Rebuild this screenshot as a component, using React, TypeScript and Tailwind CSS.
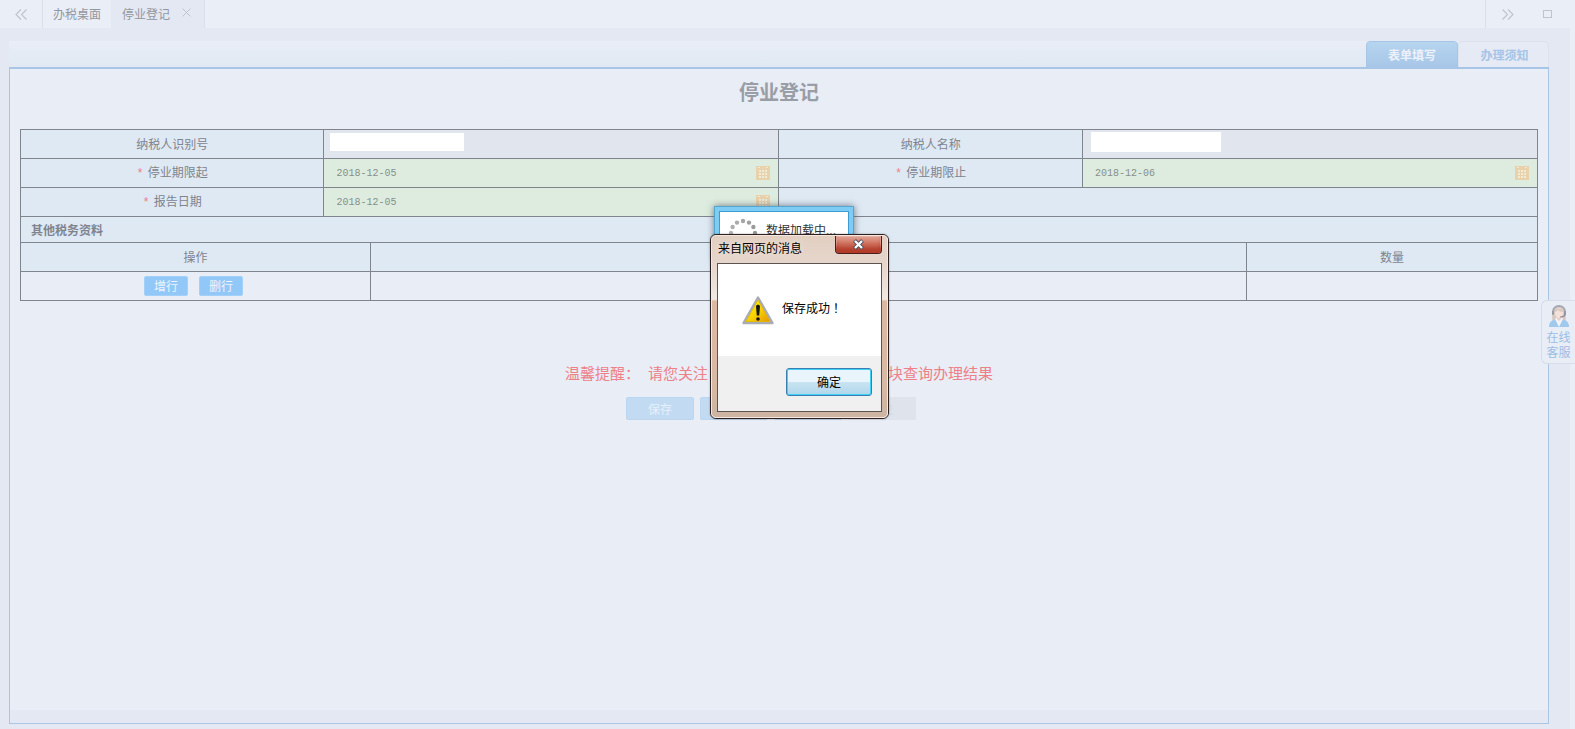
import React, { useState } from "react";

const SANS = "font-['Noto_Sans_CJK_SC','Liberation_Sans',sans-serif]";

function CalendarIcon() {
  return (
    <svg width="14" height="14" viewBox="0 0 14 14" shapeRendering="crispEdges">
      <rect width="14" height="14" fill="#e9d1ab" />
      <path d="M2 1h2v1H2zM10 1h2v1h-2z" fill="#f3e8d2" />
      <path
        d="M3 4h2v2H3zM6 4h2v2H6zM9 4h2v2H9zM3 7h2v2H3zM6 7h2v2H6zM9 7h2v2H9zM3 10h2v2H3zM6 10h2v2H6zM9 10h2v2H9z"
        fill="#eeecd6"
      />
    </svg>
  );
}

function AgentIcon() {
  return (
    <svg width="22" height="24" viewBox="0 0 22 24">
      <path d="M5 19C3 13 4 3 11 2c7 1 8 11 6 17z" fill="#d9c9c1" />
      <path d="M1 23c0-5 3-7 7-8h6c4 1 7 3 7 8z" fill="#9fcaee" />
      <path d="M7 15l4 8 4-8-2-2H9z" fill="#f3f3f6" />
      <path d="M9 11h4v4l-2 2-2-2z" fill="#e9d0c4" />
      <ellipse cx="11" cy="9" rx="4" ry="5" fill="#f3e2d9" />
      <path d="M6 8c1-4 8-5 10 0-3 0-5-1-6-2-1 1-2 2-4 2z" fill="#d9c9c1" />
      <path d="M5 8C5 0 17 0 17 8" fill="none" stroke="#a5a8b1" strokeWidth="2" />
      <rect x="4" y="7" width="2" height="4" rx="1" fill="#9599a4" />
      <rect x="16" y="7" width="2" height="4" rx="1" fill="#9599a4" />
      <path d="M17 10c0 2-2 3-5 3" fill="none" stroke="#858995" strokeWidth="1.2" />
    </svg>
  );
}

function WarningIcon() {
  return (
    <svg width="32" height="29" viewBox="0 0 32 29">
      <defs>
        <linearGradient id="warn" x1="0" y1="0" x2="1" y2="1">
          <stop offset="0.2" stopColor="#fff200" />
          <stop offset="0.55" stopColor="#f8d000" />
          <stop offset="1" stopColor="#e08a00" />
        </linearGradient>
      </defs>
      <path
        d="M16 1.5L30.5 27H1.5z"
        fill="url(#warn)"
        stroke="#a9abb5"
        strokeWidth="2.4"
        strokeLinejoin="round"
      />
      <path d="M16 4L28 25.5H4z" fill="none" stroke="#e5b800" strokeWidth="0.8" />
      <path d="M14 10.5c0-2.5 4-2.5 4 0l-.8 9h-2.4z" fill="#151515" />
      <circle cx="16" cy="23" r="1.8" fill="#151515" />
    </svg>
  );
}

function Spinner() {
  const dots = Array.from({ length: 12 }, (_, i) => i);
  return (
    <svg width="30" height="30" viewBox="0 0 30 30">
      {dots.map((i) => {
        const a = (i * Math.PI) / 6;
        const shade = 150 + ((15 - i) % 12) * 5;
        return (
          <circle
            key={i}
            cx={15 + 12 * Math.sin(a)}
            cy={15 - 12 * Math.cos(a)}
            r="2.2"
            fill={`rgb(${shade},${shade},${shade})`}
          />
        );
      })}
    </svg>
  );
}

function TopBar() {
  return (
    <nav className="flex h-7 bg-[#e9eef7] text-[12px] text-[#93979f]">
      <button aria-label="向左" className="flex w-[43px] items-center justify-center border-r border-[#dcdfe9]">
        <svg width="12" height="11" viewBox="0 0 12 11" fill="none" stroke="#bfc2cb" strokeWidth="1.1">
          <path d="M6 .5l-5 5 5 5M11.5 .5l-5 5 5 5" />
        </svg>
      </button>
      <button className="w-[68px] text-center">办税桌面</button>
      <div className="flex w-[94px] items-center border-r border-[#dcdfe9] bg-[#e4e8f2] pl-[11px]">
        <button>停业登记</button>
        <button aria-label="关闭" className="ml-3 pb-1">
          <svg width="9" height="9" viewBox="0 0 9 9" stroke="#bfc2cb">
            <path d="M.5 .5l8 8M8.500 .5l-8 8" />
          </svg>
        </button>
      </div>
      <div className="ml-auto flex w-[90px] items-center border-l border-[#dcdfe9] pl-4">
        <button aria-label="向右">
          <svg width="12" height="11" viewBox="0 0 12 11" fill="none" stroke="#bfc2cb" strokeWidth="1.1">
            <path d="M.5 .5l5 5-5 5M6 .5l5 5-5 5" />
          </svg>
        </button>
        <button aria-label="全屏" className="ml-[29px] h-2 w-[9px] border border-[#c1c4cd]" />
      </div>
    </nav>
  );
}

function Label({ text, htmlFor, required }: { text: string; htmlFor: string; required?: boolean }) {
  return (
    <th className="h-[29px] border border-[#80848d] bg-[#dfe9f4] p-0 text-center font-normal">
      <label htmlFor={htmlFor}>
        {required && <span className="mr-1 font-['Liberation_Mono',monospace] text-[#ee8088]">*</span>}
        {text}
      </label>
    </th>
  );
}

function DateCell({ id, initial }: { id: string; initial: string }) {
  const [value, setValue] = useState(initial);
  return (
    <td className="border border-[#80848d] bg-[#deecdf] p-0">
      <div className="flex items-center pr-2 pl-3">
        <input
          id={id}
          value={value}
          onChange={(e) => setValue(e.target.value)}
          className="h-5 min-w-0 flex-1 font-['Liberation_Mono',monospace] text-[10px] text-[#878f8c] outline-none"
        />
        <button aria-label="选择日期">
          <CalendarIcon />
        </button>
      </div>
    </td>
  );
}

function FormTables() {
  return (
    <>
      <table className="w-full table-fixed border-collapse leading-4">
        <colgroup>
          <col className="w-1/5" />
          <col className="w-[30%]" />
          <col className="w-1/5" />
          <col className="w-[30%]" />
        </colgroup>
        <tbody>
          <tr>
            <Label text="纳税人识别号" htmlFor="taxNo" />
            <td className="border border-[#80848d] bg-[#e1e5ee] p-0">
              <input id="taxNo" readOnly className="mb-1 ml-1.5 block h-[18px] w-[134px] bg-white" />
            </td>
            <Label text="纳税人名称" htmlFor="taxName" />
            <td className="border border-[#80848d] bg-[#e1e5ee] p-0">
              <input id="taxName" readOnly className="mb-1 ml-2 block h-5 w-[130px] bg-white" />
            </td>
          </tr>
          <tr>
            <Label text="停业期限起" htmlFor="from" required />
            <DateCell id="from" initial="2018-12-05" />
            <Label text="停业期限止" htmlFor="to" required />
            <DateCell id="to" initial="2018-12-06" />
          </tr>
          <tr>
            <Label text="报告日期" htmlFor="report" required />
            <DateCell id="report" initial="2018-12-05" />
            <td colSpan={2} className="border border-[#80848d] bg-[#dfe9f4] p-0" />
          </tr>
        </tbody>
      </table>
      <table className="-mt-px w-full table-fixed border-collapse leading-4">
        <colgroup>
          <col className="w-[350px]" />
          <col />
          <col className="w-[291px]" />
        </colgroup>
        <tbody>
          <tr>
            <th colSpan={3} className="h-[26px] border border-[#80848d] bg-[#dfe9f4] py-0 pl-2.5 text-left font-bold">
              其他税务资料
            </th>
          </tr>
          <tr className="bg-[#dfe9f4]">
            <th className="h-[29px] border border-[#80848d] p-0 font-normal">操作</th>
            <td className="border border-[#80848d] p-0" />
            <th className="border border-[#80848d] p-0 font-normal">数量</th>
          </tr>
          <tr>
            <td className="h-[29px] border border-[#80848d] p-0">
              <div className="flex justify-center gap-[11px] pr-1">
                <button className="h-5 w-11 rounded-xs border border-[#a3d0f8] bg-[#92c8f7] leading-4 text-[#eef5fc]">增行</button>
                <button className="h-5 w-11 rounded-xs border border-[#a3d0f8] bg-[#92c8f7] leading-4 text-[#eef5fc]">删行</button>
              </div>
            </td>
            <td className="border border-[#80848d]" />
            <td className="border border-[#80848d]" />
          </tr>
        </tbody>
      </table>
    </>
  );
}

function LoadingBox() {
  return (
    <div className="absolute top-[206px] left-[714px] h-[54px] w-[140px] border border-[#55a5cd] bg-[#7dccf4] p-1 shadow-[0_0_7px_rgba(70,80,95,0.75)]">
      <div className="flex h-full gap-2 border border-[#3d9ad2] bg-white pt-1.5 pl-2 text-[12px] text-[#333]">
        <Spinner />
        <span className="pt-1 leading-4 whitespace-nowrap">数据加载中...</span>
      </div>
    </div>
  );
}

function AlertDialog() {
  return (
    <div
      role="alertdialog"
      aria-labelledby="alert-title"
      className="absolute top-[234px] left-[710px] w-[179px] rounded-md border border-[#2c2020] text-black shadow-[0_0_2px_rgba(40,30,30,0.4)]"
    >
      <div className="rounded-[5px] border border-[#f6e8de] bg-[linear-gradient(to_bottom,#e2cfc2_0%,#e6d6cb_16%,#f1e9e3_35%,#dcb8a1_36%,#d8b9a5_80%,#cdb4a3_100%)] px-[5px] pb-[5px]">
        <div className="flex h-[27px] items-start justify-between">
          <h2 id="alert-title" className="pl-px text-[12px] leading-6 [text-shadow:0_0_6px_#f6ece5]">
            来自网页的消息
          </h2>
          <button
            aria-label="关闭"
            className="flex h-[18px] w-[47px] items-center justify-center rounded-b-sm border border-t-0 border-[#4c1d1a] bg-linear-to-b from-[#dfa596] from-0% via-[#d0725f] via-45% to-[#c76a58] to-100% shadow-[inset_0_-8px_5px_-2px_#b23a28,inset_0_0_0_1px_#e5b0a4]"
          >
            <svg width="13" height="11" viewBox="0 0 13 11">
              <path d="M2.500 1.500l8 8M10.500 1.500l-8 8" stroke="#4f5563" strokeWidth="4" />
              <path d="M3 2l7 7M10 2l-7 7" stroke="#fff" strokeWidth="2.200" />
            </svg>
          </button>
        </div>
        <div className="border border-[#5d5451] bg-[#f0f0f0]">
          <div className="flex h-[92px] items-center bg-white pl-6">
            <WarningIcon />
            <p className="ml-2 pb-1 text-[12px]">
              保存成功
              <span lang="zh-TW" className="font-['Noto_Sans_CJK_TC',sans-serif]">
                ！
              </span>
            </p>
          </div>
          <div className="flex h-[55px] items-start justify-end pt-3 pr-[9px]">
            <button className="h-7 w-[86px] rounded-[3px] border border-[#3b7fae] bg-linear-to-b from-[#eaf5fb] from-50% via-[#c9e4f2] via-50% to-[#b0d6ea] text-[12px] shadow-[inset_0_0_0_1px_#3fd0f8]">
              确定
            </button>
          </div>
        </div>
      </div>
    </div>
  );
}

export default function App() {
  return (
    <div className={`relative flex min-h-screen flex-col overflow-hidden bg-[#e4e8f2] text-[12px] text-[#80848d] ${SANS}`}>
      <TopBar />
      <div className="flex flex-1 border-r-[5px] border-[#e9eef7] pt-[13px] pr-[21px] pb-[5px] pl-[9px]">
        <main className="flex min-w-0 flex-1 flex-col">
          <div className="flex h-7 justify-end border-b-2 border-[#a7c6e7] bg-linear-to-b from-[#e9edf7] to-[#e0e9f3] font-bold">
            <button className="-mb-0.5 h-7 w-[92px] rounded-t-sm border border-[#a7c6e7] bg-linear-to-b from-[#b6d5ef] to-[#a7c5e7] text-[#edf2fa]">
              表单填写
            </button>
            <button className="h-[26px] w-[91px] rounded-t-sm border border-b-0 border-[#dce1ec] bg-[#e5eaf5] pl-0.5 text-[#a5c4e7]">
              办理须知
            </button>
          </div>
          <div className="flex flex-1 flex-col border border-t-0 border-[#abc5e5] pb-[13px]">
            <div className="flex-1 bg-[#e9edf6] px-2.5">
              <h1 className="pt-2 pb-[22px] text-center text-[20px] leading-[30px] font-bold text-[#999da5]">停业登记</h1>
              <FormTables />
              <p className="mt-[60px] flex justify-center text-[15px] leading-6 text-[#ee8088]">
                <span className="mr-2">温馨提醒：</span>
                <span className="mr-[180px]">请您关注</span>
                <span>块查询办理结果</span>
              </p>
              <div className="mt-3 flex justify-center gap-1.5 pr-4">
                <button className="h-[23px] w-[68px] rounded-xs border border-[#bad6f0] bg-[#c2dbf3] leading-5 text-[#e6f0fa]">保存</button>
                <button aria-label="打印" className="h-[23px] w-[68px] rounded-xs border border-[#bad6f0] bg-[#c2dbf3]" />
                <button aria-label="预览" className="h-[23px] w-[68px] rounded-xs border border-[#bad6f0] bg-[#c2dbf3]" />
                <button disabled className="h-[23px] w-[68px] bg-[#dfe3ec] leading-5 text-[#d3dde9]">
                  提交
                </button>
              </div>
            </div>
          </div>
        </main>
      </div>
      <a
        href="#service"
        className="absolute top-[300px] right-0 flex h-16 w-[34px] flex-col items-center rounded-l-md border border-r-0 border-[#d6deeb] bg-[#e8edf6] pt-[3px] leading-[15px] text-[#9dbde4]"
      >
        <AgentIcon />
        <span className="pt-px">在线</span>
        <span>客服</span>
      </a>
      <LoadingBox />
      <AlertDialog />
    </div>
  );
}
